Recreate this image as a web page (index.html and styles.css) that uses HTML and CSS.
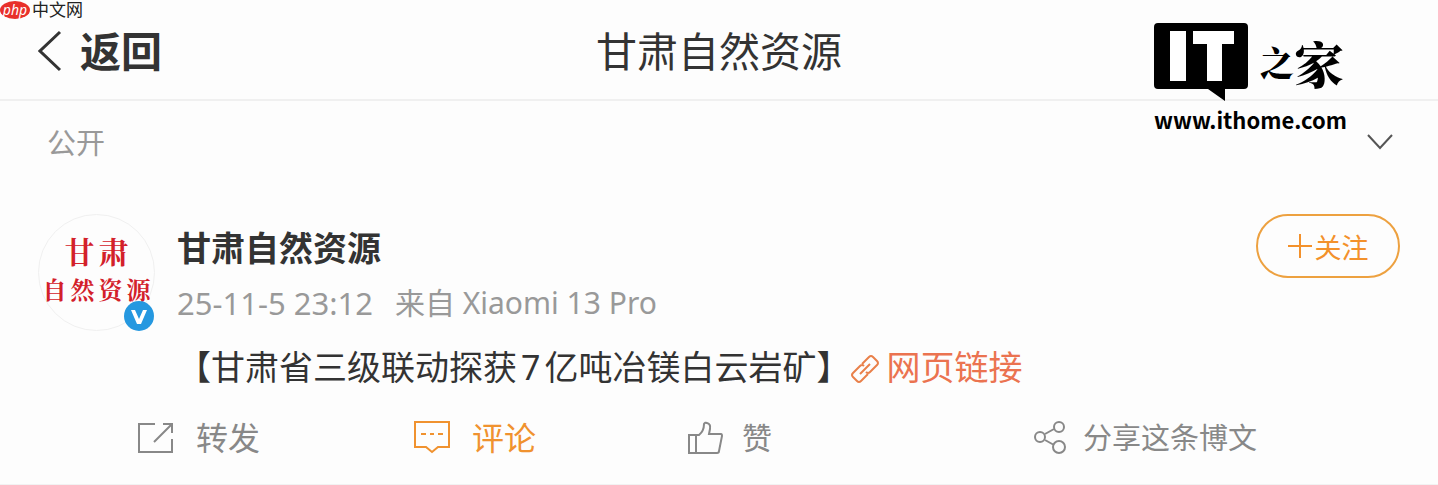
FILE: index.html
```html
<!DOCTYPE html>
<html lang="zh-CN">
<head>
<meta charset="utf-8">
<meta name="viewport" content="width=device-width, initial-scale=1">
<title>甘肃自然资源</title>
<link rel="stylesheet" href="styles.css">
</head>
<body>
<header class="topbar">
  <button class="back" type="button">
    <svg class="back-icon" viewBox="0 0 24 42" aria-hidden="true"><path d="M22 2 2 21l20 19"/></svg>
    <span>返回</span>
  </button>
  <h1 class="topbar-title">甘肃自然资源</h1>
</header>

<main>
  <div class="visibility">
    <span>公开</span>
    <button class="expand" type="button" aria-label="展开">
      <svg class="expand-icon" viewBox="0 0 26 18" aria-hidden="true"><path d="m1 1 12 13L25 1"/></svg>
    </button>
  </div>

  <article class="post">
    <div class="avatar">
      <div class="avatar-top"><span>甘</span><span>肃</span></div>
      <div class="avatar-bottom"><span>自</span><span>然</span><span>资</span><span>源</span></div>
      <svg class="verified" viewBox="0 0 30 30" aria-hidden="true"><circle cx="15" cy="15" r="15"/><path d="M7 9h4l4 9 4-9h4l-6 14h-4z"/></svg>
    </div>
    <div class="post-body">
      <h2 class="author">甘肃自然资源</h2>
      <p class="meta"><time class="posted" datetime="2025-11-05T23:12">25-11-5 23:12</time><span>来自 Xiaomi 13 Pro</span></p>
      <p class="content">【甘肃省三级联动探获<span class="count">7</span>亿吨冶镁白云岩矿】<a class="link" href="#"><svg class="link-icon" viewBox="0 0 30 30" aria-hidden="true"><path d="m12 10 7-7q2-2 4 0l4 4q2 2 0 4l-7 7q-2 2-4 0M18 20l-7 7q-2 2-4 0l-4-4q-2-2 0-4l7-7q2-2 4 0M10 20 20 10"/></svg>网页链接</a></p>
    </div>
    <button class="follow" type="button">
      <svg class="plus" viewBox="0 0 24 24" aria-hidden="true"><path d="M12 0v24M0 12h24"/></svg>
      <span>关注</span>
    </button>
  </article>

  <div class="actions">
    <button class="action" type="button">
      <svg class="action-icon" viewBox="0 0 37 34" aria-hidden="true"><path d="M18 3H2v28h33V18M17 21 34 4M26 3h9v9"/></svg>
      <span>转发</span>
    </button>
    <button class="action action-active" type="button">
      <svg class="action-icon" viewBox="0 0 37 34" aria-hidden="true"><path d="M2 1h34v25H25l-6 5-6-5H2zM8 13h5m4 0h4m4 0h5"/></svg>
      <span>评论</span>
    </button>
    <button class="action action-like" type="button">
      <svg class="action-icon" viewBox="0 0 37 34" aria-hidden="true"><path d="M2 14h7v18H2zM9 14h3q5-4 5-11 1-2 3-1 4 1 3 6l-1 5h12q1 0 1 2l-3 15q0 2-2 2H9"/></svg>
      <span>赞</span>
    </button>
    <button class="action action-share" type="button">
      <svg class="action-icon" viewBox="0 0 34 34" aria-hidden="true"><circle cx="7" cy="16" r="5"/><circle cx="26" cy="6" r="5"/><circle cx="26" cy="26" r="6"/><path d="m12 13 9-5M12 19l9 5"/></svg>
      <span>分享这条博文</span>
    </button>
  </div>
</main>

<div class="site-mark">
  <span class="site-badge">php</span>
  <span>中文网</span>
</div>

<div class="ithome">
  <div class="ithome-logo">
    <svg class="ithome-it" viewBox="0 0 94 78" role="img" aria-label="IT">
      <path d="M4 0h86q4 0 4 4v58q0 4-4 4H71v12L54 66H4q-4 0-4-4V4q0-4 4-4z"/>
      <path class="ithome-cut" d="M16 8h16v50H16zM39 8h41v13H68v37H53V21H39z"/>
    </svg>
    <div class="ithome-name"><span class="ithome-small">之</span><span>家</span></div>
  </div>
  <div class="ithome-url">www.ithome.com</div>
</div>
</body>
</html>
```

FILE: styles.css
```css
* {
  box-sizing: border-box;
}

body {
  margin: 0;
  background: #fdfdfd;
  color: #333;
  font-family: "Noto Sans", "Noto Sans CJK SC", sans-serif;
  position: relative;
}

h1, h2, p {
  margin: 0;
}

button {
  padding: 0;
  border: 0;
  background: none;
  color: inherit;
  font: inherit;
  cursor: pointer;
}

svg {
  flex: none;
  fill: none;
  stroke: currentColor;
}

.topbar {
  display: grid;
  grid-template-columns: 1fr auto 1fr;
  align-items: center;
  padding: 21px 38px 18px;
  border-bottom: 2px solid #f0f0f0;
}

.back {
  display: flex;
  align-items: center;
  gap: 18px;
  justify-self: start;
  font-size: 41px;
  font-weight: 700;
  line-height: 60px;
}

.back-icon {
  width: 24px;
  height: 42px;
  stroke-width: 3;
}

.topbar-title {
  font-size: 41px;
  font-weight: 400;
  line-height: 60px;
}

.visibility {
  display: flex;
  align-items: center;
  justify-content: space-between;
  padding: 20px 45px 24px 47px;
  color: #999;
  font-size: 29px;
  line-height: 44px;
}

.expand {
  display: flex;
  color: #555;
}

.expand-icon {
  width: 26px;
  height: 18px;
  stroke-width: 2;
}

.post {
  display: flex;
  align-items: flex-start;
  gap: 22px;
  padding: 25px 38px 0;
}

.avatar {
  position: relative;
  display: flex;
  flex: none;
  flex-direction: column;
  align-items: center;
  width: 117px;
  height: 117px;
  padding-top: 16px;
  border: 1px solid #f0f0f0;
  border-radius: 50%;
  color: #d3202a;
  font-family: "Noto Serif CJK SC", "Noto Sans CJK SC", serif;
  font-weight: 700;
  white-space: nowrap;
}

.avatar-top {
  display: flex;
  gap: 4px;
  font-size: 30px;
  line-height: 38px;
}

.avatar-bottom {
  display: flex;
  gap: 4px;
  font-size: 24px;
  line-height: 40px;
}

.verified {
  position: absolute;
  right: 0;
  bottom: -1px;
  width: 30px;
  height: 30px;
  fill: #2598e0;
  stroke: none;
}

.verified path {
  fill: #fff;
}

.post-body {
  flex: 1;
  min-width: 0;
  padding-top: 8px;
}

.author {
  font-size: 34px;
  font-weight: 700;
  line-height: 52px;
}

.meta {
  display: flex;
  gap: 22px;
  padding: 5px 0 14px;
  color: #999;
  font-size: 30px;
  line-height: 48px;
}

.posted {
  font-size: 31px;
}

.content {
  font-size: 34px;
  line-height: 52px;
}

.count {
  padding: 0 4px;
}

.link {
  color: #eb7350;
  text-decoration: none;
}

.link-icon {
  width: 30px;
  height: 30px;
  margin-right: 6px;
  color: #e9804a;
  stroke-width: 2;
  vertical-align: -4px;
}

.follow {
  display: flex;
  flex: none;
  align-items: center;
  justify-content: center;
  gap: 3px;
  width: 144px;
  height: 64px;
  margin-left: -144px;
  border: 2px solid #eda140;
  border-radius: 32px;
  color: #f3912b;
  font-size: 27px;
}

.plus {
  width: 24px;
  height: 24px;
  stroke-width: 2;
}

.actions {
  display: grid;
  grid-template-columns: 276fr 274fr 346fr 405fr;
  align-items: center;
  padding: 17px 0 18px 137px;
  border-bottom: 1px solid #f2f2f2;
}

.action {
  display: flex;
  align-items: center;
  gap: 22px;
  color: #888;
  font-size: 32px;
  line-height: 56px;
}

.action-active {
  color: #f0922f;
}

.action-like {
  gap: 18px;
  font-size: 30px;
}

.action-share {
  gap: 16px;
  font-size: 29px;
}

.action-icon {
  width: 37px;
  height: 34px;
  stroke-width: 2;
}

.action-share .action-icon {
  width: 34px;
}

.site-mark {
  position: absolute;
  top: 0;
  left: 0;
  display: flex;
  align-items: center;
  gap: 2px;
  color: #222;
  font-size: 17px;
  line-height: 19px;
}

.site-badge {
  width: 30px;
  border-radius: 50%;
  background: #e8302b;
  color: #fff;
  font-size: 14px;
  font-style: italic;
  line-height: 18px;
  text-align: center;
}

.ithome {
  position: absolute;
  top: 23px;
  right: 91px;
  color: #000;
}

.ithome-logo {
  display: flex;
  gap: 12px;
}

.ithome-it {
  width: 94px;
  height: 78px;
  fill: #000;
  stroke: none;
}

.ithome-cut {
  fill: #fff;
}

.ithome-name {
  display: flex;
  align-items: center;
  font-family: "Noto Serif CJK SC", "Noto Sans CJK SC", serif;
  font-size: 50px;
  font-weight: 900;
  line-height: 68px;
}

.ithome-small {
  font-size: 34px;
}

.ithome-url {
  font-family: "Noto Sans CJK SC", sans-serif;
  font-size: 22px;
  font-weight: 700;
  line-height: 36px;
}
```
